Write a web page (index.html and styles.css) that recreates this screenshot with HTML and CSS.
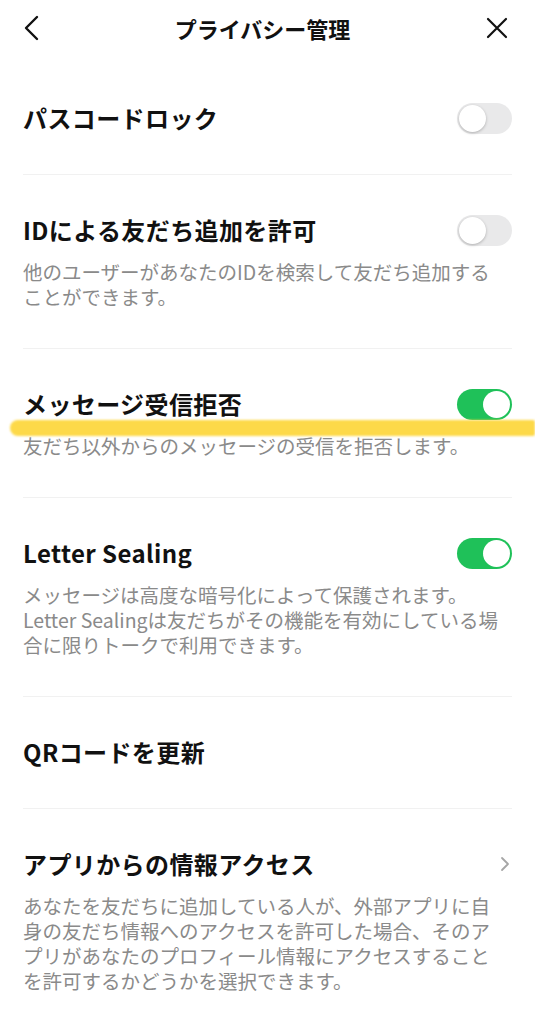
FILE: index.html
```html
<!DOCTYPE html>
<html lang="ja">
  <head>
    <meta charset="utf-8" />
    <meta name="viewport" content="width=device-width, initial-scale=1" />
    <title>プライバシー管理</title>
    <link rel="stylesheet" href="styles.css">
  </head>
  <body>
    <header class="topbar">
      <button class="icon-btn" aria-label="戻る">
        <svg width="18" height="26" viewBox="0 0 18 26"><path d="M15 2 L4 13 L15 24" fill="none" stroke="#111" stroke-width="2.4" stroke-linecap="round" stroke-linejoin="round"/></svg>
      </button>
      <h1 class="topbar-title">プライバシー管理</h1>
      <button class="icon-btn" aria-label="閉じる">
        <svg width="24" height="24" viewBox="0 0 24 24"><path d="M3 3 L21 21 M21 3 L3 21" fill="none" stroke="#111" stroke-width="2.2" stroke-linecap="round"/></svg>
      </button>
    </header>

    <main class="list">
      <section class="row">
        <div class="row-head">
          <h2 class="row-title">パスコードロック</h2>
          <span class="switch"></span>
        </div>
      </section>

      <section class="row">
        <div class="row-head">
          <h2 class="row-title">IDによる友だち追加を許可</h2>
          <span class="switch"></span>
        </div>
        <p class="row-desc">他のユーザーがあなたのIDを検索して友だち追加する<br>ことができます。</p>
      </section>

      <section class="row">
        <div class="row-head">
          <h2 class="row-title">メッセージ受信拒否</h2>
          <span class="switch on"></span>
        </div>
        <span class="marker"></span>
        <p class="row-desc">友だち以外からのメッセージの受信を拒否します。</p>
      </section>

      <section class="row">
        <div class="row-head">
          <h2 class="row-title">Letter Sealing</h2>
          <span class="switch on"></span>
        </div>
        <p class="row-desc">メッセージは高度な暗号化によって保護されます。<br>Letter Sealingは友だちがその機能を有効にしている場<br>合に限りトークで利用できます。</p>
      </section>

      <section class="row">
        <div class="row-head">
          <h2 class="row-title">QRコードを更新</h2>
        </div>
      </section>

      <section class="row">
        <div class="row-head">
          <h2 class="row-title">アプリからの情報アクセス</h2>
          <svg class="chevron" width="10" height="16" viewBox="0 0 10 16"><path d="M2 2 L8 8 L2 14" fill="none" stroke="#a6a6a6" stroke-width="1.8" stroke-linecap="round" stroke-linejoin="round"/></svg>
        </div>
        <p class="row-desc">あなたを友だちに追加している人が、外部アプリに自<br>身の友だち情報へのアクセスを許可した場合、そのア<br>プリがあなたのプロフィール情報にアクセスすること<br>を許可するかどうかを選択できます。</p>
      </section>
    </main>
  </body>
</html>
```

FILE: styles.css
```css
body {
  margin: 0;
  background-color: #ffffff;
  font-family: "Noto Sans CJK JP", "Noto Sans", sans-serif;
  color: #111111;
}

.topbar {
  display: flex;
  align-items: center;
  justify-content: space-between;
  height: 36px;
  padding: 10px 26px 0 22px;
  margin-bottom: 17px;
}

.icon-btn {
  display: flex;
  align-items: center;
  background: none;
  border: 0;
  padding: 0;
}

.topbar-title {
  margin: 0;
  font-size: 22px;
  font-weight: 700;
  line-height: 36px;
}

.list {
  padding: 0 23px;
}

.row {
  position: relative;
  padding: 38px 0 39px 0;
  border-bottom: 1px solid #f1f1f1;
}

.row:last-child {
  border-bottom: 0;
}

.row-head {
  display: flex;
  align-items: center;
  justify-content: space-between;
  height: 34px;
}

.row-title {
  margin: 0;
  font-size: 24px;
  font-weight: 700;
  line-height: 34px;
  letter-spacing: 0.4px;
}

.row-desc {
  margin: 12px 0 0 0;
  font-size: 19.5px;
  line-height: 25px;
  color: #8a8a8a;
}

.switch {
  position: relative;
  width: 55px;
  height: 31px;
  border-radius: 16px;
  background-color: #e9e9ea;
  flex-shrink: 0;
}

.switch::after {
  content: "";
  position: absolute;
  top: 2px;
  left: 2px;
  width: 27px;
  height: 27px;
  border-radius: 50%;
  background-color: #ffffff;
  box-shadow: 0 1px 3px rgba(0, 0, 0, 0.25);
}

.switch.on {
  background-color: #1fc159;
}

.switch.on::after {
  left: 26px;
  box-shadow: none;
}

.chevron {
  margin-right: 2px;
}

.marker {
  position: absolute;
  top: 71px;
  left: -13px;
  right: -23px;
  height: 16px;
  border-radius: 8px 2px 2px 8px;
  background-color: #fdd63a;
  opacity: 0.92;
  filter: blur(0.8px);
}
```
